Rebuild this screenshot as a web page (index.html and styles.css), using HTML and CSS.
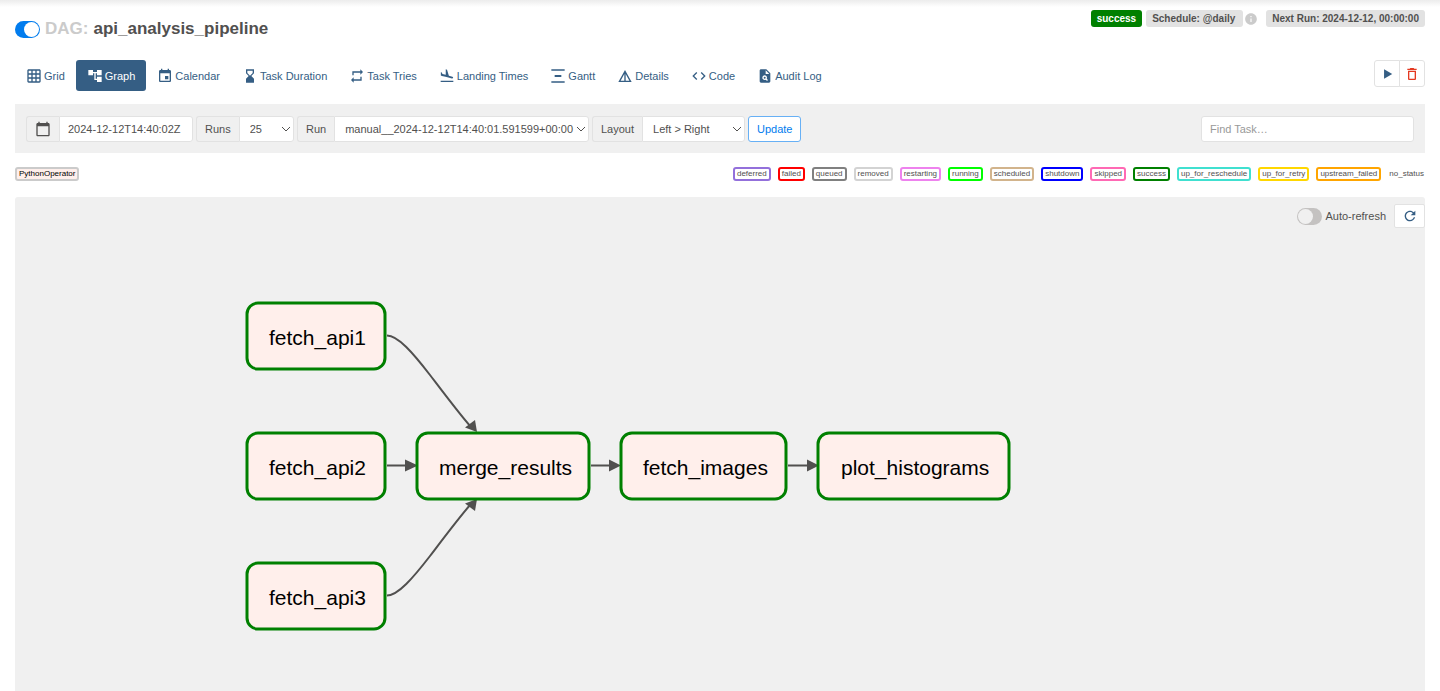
FILE: index.html
```html
<!DOCTYPE html>
<html lang="en">
<head>
<meta charset="utf-8">
<meta name="viewport" content="width=device-width, initial-scale=1">
<title>api_analysis_pipeline - Graph</title>
<link rel="stylesheet" href="styles.css">
</head>
<body>
<svg class="sprite" aria-hidden="true">
  <symbol id="i-grid" viewBox="0 0 24 24"><path d="M20 2H4c-1.1 0-2 .9-2 2v16c0 1.1.9 2 2 2h16c1.1 0 2-.9 2-2V4c0-1.1-.9-2-2-2zM8 20H4v-4h4v4zm0-6H4v-4h4v4zm0-6H4V4h4v4zm6 12h-4v-4h4v4zm0-6h-4v-4h4v4zm0-6h-4V4h4v4zm6 12h-4v-4h4v4zm0-6h-4v-4h4v4zm0-6h-4V4h4v4z"/></symbol>
  <symbol id="i-tree" viewBox="0 0 24 24"><path d="M22 11V3h-7v3H9V3H2v8h7V8h2v10h4v3h7v-8h-7v3h-2V8h2v3z"/></symbol>
  <symbol id="i-event" viewBox="0 0 24 24"><path d="M17 12h-5v5h5v-5zM16 1v2H8V1H6v2H5c-1.11 0-1.99.9-1.99 2L3 19c0 1.1.89 2 2 2h14c1.1 0 2-.9 2-2V5c0-1.1-.9-2-2-2h-1V1h-2zm3 18H5V8h14v11z"/></symbol>
  <symbol id="i-hourglass" viewBox="0 0 24 24"><path d="M18 22l-.01-6L14 12l3.99-4.01L18 2H6v6l4 4-4 3.99V22h12zM8 7.5V4h8v3.5l-4 4-4-4z"/></symbol>
  <symbol id="i-repeat" viewBox="0 0 24 24"><path d="M7 7h10v3l4-4-4-4v3H5v6h2V7zm10 10H7v-3l-4 4 4 4v-3h12v-6h-2v4z"/></symbol>
  <symbol id="i-land" viewBox="0 0 24 24"><path d="M2.5 19h19v2h-19zm7.18-5.73l4.35 1.16 5.31 1.42c.8.21 1.62-.26 1.84-1.06.21-.8-.26-1.62-1.06-1.84l-5.31-1.42-2.76-9.02L10.12 2v8.28L5.15 8.95l-.93-2.32-1.45-.39v5.17l1.6.43 5.31 1.43z"/></symbol>
  <symbol id="i-gantt" viewBox="0 0 24 24"><path d="M22 2v2H2V2h20zM7 10.500v3h10v-3H7zM2 20v2h20v-2H2z"/></symbol>
  <symbol id="i-details" viewBox="0 0 24 24"><path d="M12 3 2 21h20L12 3zm1 5.920L18.600 19H13V8.920zm-2 0V19H5.400L11 8.920z"/></symbol>
  <symbol id="i-code" viewBox="0 0 24 24"><path d="M9.400 16.600L4.800 12l4.600-4.600L8 6l-6 6 6 6 1.400-1.400zm5.200 0l4.600-4.600-4.600-4.600L16 6l6 6-6 6-1.400-1.400z"/></symbol>
  <symbol id="i-audit" viewBox="0 0 24 24"><path d="M14 2H6c-1.100 0-2 .9-2 2v16c0 1.100.89 2 1.990 2H18c1.100 0 2-.9 2-2V8l-6-6zm1.040 17.450l-1.880-1.880c-1.330.71-3.010.53-4.130-.59-1.370-1.370-1.370-3.580 0-4.950 1.370-1.370 3.580-1.370 4.950 0 1.120 1.120 1.310 2.800.59 4.130l1.880 1.880-1.410 1.410zM13 9V3.500L18.500 9H13z"/><circle cx="11.5" cy="14.500" r="1.500"/></symbol>
  <symbol id="i-calendar" viewBox="0 0 24 24"><path d="M20 3h-1V1h-2v2H7V1H5v2H4c-1.100 0-2 .9-2 2v16c0 1.100.9 2 2 2h16c1.100 0 2-.9 2-2V5c0-1.100-.9-2-2-2zm0 18H4V8h16v13z"/></symbol>
  <symbol id="i-play" viewBox="0 0 24 24"><path d="M7 4v16l14-8z"/></symbol>
  <symbol id="i-delete" viewBox="0 0 24 24"><path d="M16 9v10H8V9h8m-1.500-6h-5l-1 1H5v2h14V4h-3.500l-1-1zM18 7H6v12c0 1.100.9 2 2 2h8c1.100 0 2-.9 2-2V7z"/></symbol>
  <symbol id="i-refresh" viewBox="0 0 24 24"><path d="M17.650 6.350C16.200 4.900 14.210 4 12 4c-4.420 0-7.990 3.580-7.990 8s3.570 8 7.990 8c3.730 0 6.840-2.550 7.730-6h-2.080c-.82 2.330-3.040 4-5.650 4-3.310 0-6-2.690-6-6s2.690-6 6-6c1.660 0 3.140.69 4.220 1.780L13 11h7V4l-2.350 2.350z"/></symbol>
  <symbol id="i-info" viewBox="0 0 24 24"><path d="M12 2C6.480 2 2 6.480 2 12s4.480 10 10 10 10-4.480 10-10S17.520 2 12 2zm1 15h-2v-6h2v6zm0-8h-2V7h2v2z"/></symbol>
  <symbol id="i-chevron" viewBox="0 0 10 6"><path d="M1 1l4 4 4-4" fill="none" stroke="currentColor" stroke-width="1"/></symbol>
</svg>

<div class="page">
  <header class="dag-header">
    <h1 class="title">
      <input class="switch switch-on" type="checkbox" checked aria-label="Pause or unpause DAG">
      <span class="title-prefix">DAG:</span>
      <span>api_analysis_pipeline</span>
    </h1>
    <div class="badges">
      <a class="badge badge-success" href="#">success</a>
      <a class="badge badge-schedule" href="#">Schedule: @daily</a>
      <svg class="info"><use href="#i-info"/></svg>
      <span class="badge">Next Run: 2024-12-12, 00:00:00</span>
    </div>
  </header>

  <div class="nav-row">
    <nav class="tabs">
      <a class="tab" href="#"><svg class="icon"><use href="#i-grid"/></svg>Grid</a>
      <a class="tab tab-active" href="#"><svg class="icon"><use href="#i-tree"/></svg>Graph</a>
      <a class="tab" href="#"><svg class="icon"><use href="#i-event"/></svg>Calendar</a>
      <a class="tab" href="#"><svg class="icon"><use href="#i-hourglass"/></svg>Task Duration</a>
      <a class="tab" href="#"><svg class="icon"><use href="#i-repeat"/></svg>Task Tries</a>
      <a class="tab" href="#"><svg class="icon"><use href="#i-land"/></svg>Landing Times</a>
      <a class="tab" href="#"><svg class="icon"><use href="#i-gantt"/></svg>Gantt</a>
      <a class="tab" href="#"><svg class="icon"><use href="#i-details"/></svg>Details</a>
      <a class="tab" href="#"><svg class="icon"><use href="#i-code"/></svg>Code</a>
      <a class="tab" href="#"><svg class="icon"><use href="#i-audit"/></svg>Audit Log</a>
    </nav>
    <div class="actions">
      <button class="action" type="button" aria-label="Trigger DAG"><svg class="icon-small"><use href="#i-play"/></svg></button>
      <button class="action action-delete" type="button" aria-label="Delete DAG"><svg class="icon"><use href="#i-delete"/></svg></button>
    </div>
  </div>

  <form class="filters">
    <div class="group group-date">
      <label class="addon" for="base-date" aria-label="Base date"><svg class="icon"><use href="#i-calendar"/></svg></label>
      <input class="field" id="base-date" type="text" value="2024-12-12T14:40:02Z">
    </div>
    <div class="group group-runs">
      <label class="addon" for="runs">Runs</label>
      <div class="select-box">
        <select class="field select" id="runs"><option>25</option></select>
        <svg class="chevron"><use href="#i-chevron"/></svg>
      </div>
    </div>
    <div class="group group-run">
      <label class="addon" for="run">Run</label>
      <div class="select-box">
        <select class="field select" id="run"><option>manual__2024-12-12T14:40:01.591599+00:00</option></select>
        <svg class="chevron"><use href="#i-chevron"/></svg>
      </div>
    </div>
    <div class="group group-layout">
      <label class="addon" for="layout">Layout</label>
      <div class="select-box">
        <select class="field select" id="layout"><option>Left &gt; Right</option></select>
        <svg class="chevron"><use href="#i-chevron"/></svg>
      </div>
    </div>
    <button class="update" type="button">Update</button>
    <input class="field search" type="search" placeholder="Find Task…" aria-label="Find Task">
  </form>

  <div class="legend">
    <span class="chip chip-operator">PythonOperator</span>
    <div class="states">
      <span class="chip deferred">deferred</span>
      <span class="chip failed">failed</span>
      <span class="chip queued">queued</span>
      <span class="chip removed">removed</span>
      <span class="chip restarting">restarting</span>
      <span class="chip running">running</span>
      <span class="chip scheduled">scheduled</span>
      <span class="chip shutdown">shutdown</span>
      <span class="chip skipped">skipped</span>
      <span class="chip success">success</span>
      <span class="chip up-for-reschedule">up_for_reschedule</span>
      <span class="chip up-for-retry">up_for_retry</span>
      <span class="chip upstream-failed">upstream_failed</span>
      <span class="no-status">no_status</span>
    </div>
  </div>

  <main class="graph">
    <div class="graph-tools">
      <label class="auto-refresh"><input class="switch" type="checkbox">Auto-refresh</label>
      <button class="refresh" type="button" aria-label="Refresh"><svg class="icon"><use href="#i-refresh"/></svg></button>
    </div>
    <svg class="canvas" role="img" aria-label="Task graph">
      <g class="edges">
        <path d="M372 138.500C383 138.500 398 156 415 178C431 199 446 219 456 230"/>
        <path d="M372 268.500H391M576 268.500H595M773 268.500H792"/>
        <path d="M372 398.500C383 398.500 398 381 415 359C431 338 446 318 456 307"/>
      </g>
      <g class="arrows">
        <path d="M462 235L460 223L450 230.500z"/>
        <path d="M462 302L460 314L450 306.500z"/>
        <path d="M403 268.500L390 262.500V274.500z"/>
        <path d="M606 268.500L594 262.500V274.500z"/>
        <path d="M804 268.500L792 262.500V274.500z"/>
      </g>
      <g class="nodes">
        <rect x="232" y="106" width="138" height="66" rx="11"/>
        <rect x="232" y="236" width="138" height="66" rx="11"/>
        <rect x="232" y="366" width="138" height="66" rx="11"/>
        <rect x="402" y="236" width="172" height="66" rx="11"/>
        <rect x="606" y="236" width="165" height="66" rx="11"/>
        <rect x="803" y="236" width="191" height="66" rx="11"/>
      </g>
      <g class="names">
        <text x="254" y="148">fetch_api1</text>
        <text x="254" y="278">fetch_api2</text>
        <text x="254" y="408">fetch_api3</text>
        <text x="424" y="278">merge_results</text>
        <text x="628" y="278">fetch_images</text>
        <text x="826" y="278">plot_histograms</text>
      </g>
    </svg>
  </main>
</div>
</body>
</html>
```

FILE: styles.css
```css
* { box-sizing: border-box; }

body {
  margin: 0;
  background: #fff;
  color: #51504f;
  font-family: "Liberation Sans", Arial, Helvetica, sans-serif;
  font-size: 11px;
  line-height: 16px;
}

a { text-decoration: none; }
button, input, select { font: inherit; color: inherit; }
.sprite { display: none; }
svg { fill: currentColor; flex: none; }
.icon { width: 16px; height: 16px; }
.icon-small { width: 14px; height: 14px; }

.page {
  min-height: 100vh;
  display: flex;
  flex-direction: column;
  padding: 0 15px;
  background: linear-gradient(#ececec, #fff 7px);
}

/* Header */
.dag-header {
  display: flex;
  justify-content: space-between;
  align-items: flex-start;
  padding-top: 10px;
}
.title {
  display: flex;
  align-items: center;
  gap: 5px;
  margin: 8px 0 0;
  font-size: 17px;
  line-height: 22px;
}
.title-prefix { color: #cbcbcb; }

.switch {
  appearance: none;
  flex: none;
  width: 25px;
  height: 17px;
  margin: 0;
  padding: 1px;
  border-radius: 9px;
  background: #c4c2c1;
}
.switch::before {
  content: "";
  display: block;
  width: 15px;
  height: 15px;
  border-radius: 50%;
  background: #f0f0f0;
}
.switch-on { background: #017cee; }
.switch-on::before { margin-left: auto; background: #fff; }

.badges { display: flex; align-items: center; }
.badge {
  padding: 0 6px;
  border-radius: 3px;
  background: #e2e2e2;
  color: #51504f;
  font-size: 10px;
  font-weight: bold;
  line-height: 17px;
}
.badge-success { background: #008000; color: #fff; margin-right: 4px; }
.badge-schedule { padding-right: 8px; }
.info { width: 14px; height: 14px; margin: 0 8px 0 1px; color: #cbcbcb; }

/* Tabs */
.nav-row {
  display: flex;
  justify-content: space-between;
  align-items: flex-start;
  padding-top: 20px;
}
.tabs { display: flex; }
.tab {
  display: flex;
  align-items: center;
  gap: 2px;
  height: 31px;
  padding: 0 11px;
  border-radius: 3px;
  color: #355e84;
  white-space: nowrap;
}
.tab-active { background: #355e84; color: #fff; }
.actions { display: flex; }
.action {
  display: flex;
  align-items: center;
  justify-content: center;
  width: 26px;
  height: 27px;
  padding: 0;
  border: 1px solid #e2e2e2;
  border-radius: 3px 0 0 3px;
  background: #fff;
  color: #355e84;
}
.action-delete { margin-left: -1px; border-radius: 0 3px 3px 0; color: #e43921; }

/* Filters */
.filters {
  display: flex;
  align-items: center;
  gap: 3px;
  margin-top: 13px;
  padding: 12px 11px 11px;
  background: #f0f0f0;
}
.group { display: flex; height: 26px; }
.addon {
  display: flex;
  align-items: center;
  padding: 0 8px;
  border: 1px solid #e2e2e2;
  border-right: 0;
  border-radius: 3px 0 0 3px;
}
.field {
  width: 100%;
  height: 26px;
  padding: 0 8px;
  border: 1px solid #e2e2e2;
  border-radius: 0 3px 3px 0;
  background: #fff;
}
.group-date { width: 167px; }
.group-runs { width: 98px; }
.group-run { width: 292px; }
.group-layout { width: 153px; }
.select-box { position: relative; flex: 1; }
.select { appearance: none; padding: 0 0 0 10px; }
.chevron {
  position: absolute;
  right: 3px;
  top: 10px;
  width: 10px;
  height: 6px;
  pointer-events: none;
}
.update {
  height: 26px;
  padding: 0 8px;
  border: 1px solid #67b0f5;
  border-radius: 3px;
  background: #fff;
  color: #017cee;
}
.search { width: 213px; margin-left: auto; border-radius: 3px; }
.search::placeholder { color: #999; }

/* Legend */
.legend {
  display: flex;
  justify-content: space-between;
  align-items: center;
  padding: 14px 0 16px;
  font-size: 8px;
  line-height: 10px;
}
.states { display: flex; align-items: center; gap: 7px; }
.chip {
  padding: 0 2px;
  border: 2px solid;
  border-radius: 3px;
}
.chip-operator { border-color: #cbcbcb; background: #ffefeb; color: #000; }
.deferred { border-color: mediumpurple; }
.failed { border-color: red; }
.queued { border-color: gray; }
.removed { border-color: lightgrey; }
.restarting { border-color: violet; }
.running { border-color: lime; }
.scheduled { border-color: tan; }
.shutdown { border-color: blue; }
.skipped { border-color: hotpink; }
.success { border-color: green; }
.up-for-reschedule { border-color: turquoise; }
.up-for-retry { border-color: gold; }
.upstream-failed { border-color: orange; }
.no-status { padding: 0 1px; }

/* Graph */
.graph {
  position: relative;
  flex: 1;
  display: flex;
  border-radius: 3px 3px 0 0;
  background: #f0f0f0;
}
.graph-tools {
  position: absolute;
  top: 7px;
  right: 0;
  display: flex;
  align-items: center;
  gap: 8px;
}
.auto-refresh { display: flex; align-items: center; gap: 3px; }
.refresh {
  display: flex;
  align-items: center;
  justify-content: center;
  width: 31px;
  height: 24px;
  padding: 0;
  border: 1px solid #e2e2e2;
  border-radius: 2px;
  background: #fff;
  color: #355e84;
}
.canvas { flex: 1; min-width: 0; min-height: 450px; }
.edges { fill: none; stroke: #51504f; stroke-width: 2px; }
.arrows { fill: #51504f; }
.nodes { fill: #ffefeb; stroke: #008000; stroke-width: 3px; }
.names { fill: #000; font-size: 21px; }
```
